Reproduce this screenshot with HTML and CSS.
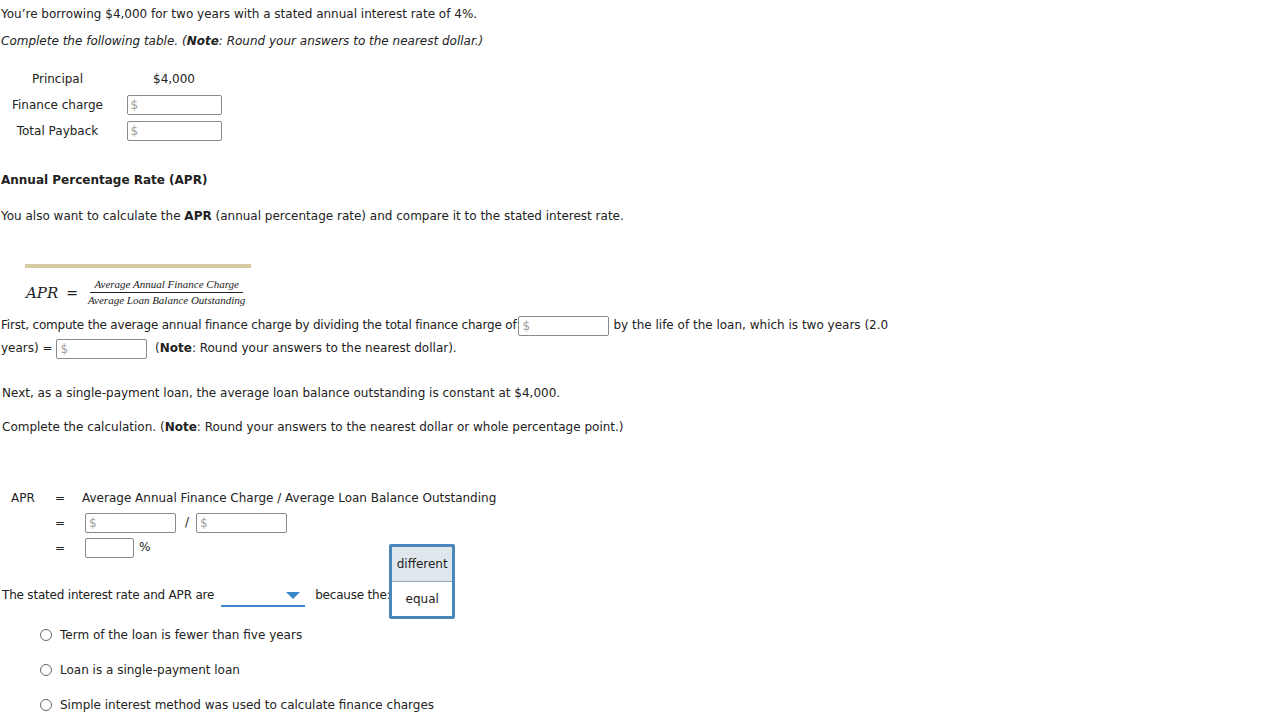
FILE: index.html
```html
<!DOCTYPE html>
<html>
<head>
<meta charset="utf-8">
<link rel="stylesheet" href="styles.css">
</head>
<body>
<div class="page">
  <p class="p1">You’re borrowing $4,000 for two years with a stated annual interest rate of 4%.</p>
  <p class="p2"><i>Complete the following table. (<b>Note</b>: Round your answers to the nearest dollar.)</i></p>

  <table class="t1">
    <tr><td class="lab">Principal</td><td class="val">$4,000</td></tr>
    <tr><td class="lab">Finance charge</td><td class="val"><span class="inp w95">$</span></td></tr>
    <tr><td class="lab">Total Payback</td><td class="val"><span class="inp w95">$</span></td></tr>
  </table>

  <h3 class="h">Annual Percentage Rate (APR)</h3>
  <p class="p3">You also want to calculate the <b>APR</b> (annual percentage rate) and compare it to the stated interest rate.</p>

  <div class="formula">
    <div class="bar"></div>
    <div class="eq">
      <span class="apr">APR</span><span class="eqs">=</span>
      <span class="frac"><span class="num">Average Annual Finance Charge</span><span class="den">Average Loan Balance Outstanding</span></span>
    </div>
  </div>

  <p class="p4"><span class="tight">First, compute the average annual finance charge by dividing the total finance charge of</span><span class="inp w91 gap">$</span>by the life of the loan, which is two years (2.0<br>years) = <span class="inp w91">$</span> &nbsp;(<b>Note</b>: Round your answers to the nearest dollar).</p>

  <p class="p5">Next, as a single-payment loan, the average loan balance outstanding is constant at $4,000.</p>
  <p class="p6">Complete the calculation. (<b>Note</b>: Round your answers to the nearest dollar or whole percentage point.)</p>

  <table class="t2">
    <tr><td class="c1">APR</td><td class="c2">=</td><td class="c3">Average Annual Finance Charge / Average Loan Balance Outstanding</td></tr>
    <tr><td class="c1"></td><td class="c2">=</td><td class="c3"><span class="inp w91">$</span><span class="slash">/</span><span class="inp w91">$</span></td></tr>
    <tr><td class="c1"></td><td class="c2">=</td><td class="c3"><span class="inp w49"></span><span class="pct">%</span></td></tr>
  </table>

  <div class="selrow">
    <span class="tight">The stated interest rate and APR are</span>
    <span class="dd"><svg width="14" height="7" viewBox="0 0 14 7"><path d="M0 0H14L7 7Z" fill="#3a86c8"/></svg>
      <span class="menu"><span class="opt sel">different</span><span class="opt">equal</span></span>
    </span>
    <span class="tight">because the:</span>
  </div>

  <ul class="radios">
    <li><span class="rb"></span>Term of the loan is fewer than five years</li>
    <li><span class="rb"></span>Loan is a single-payment loan</li>
    <li><span class="rb"></span>Simple interest method was used to calculate finance charges</li>
  </ul>
</div>
</body>
</html>
```

FILE: styles.css
```css
html, body { margin: 0; padding: 0; background: #fff; }
body { font-family: "DejaVu Sans", Verdana, sans-serif; font-size: 12px; color: #222; }
.page { padding: 0 0 0 1px; width: 920px; }
p { margin: 0; }
.tight { letter-spacing: -0.2px; }
.p1 { padding-top: 6px; line-height: 16px; }
.p2 { margin-top: 11px; line-height: 16px; }
.t1 { border-collapse: collapse; margin-top: 17px; margin-left: 0; }
.t1 td { padding: 0; height: 26px; text-align: center; }
.t1 .lab { width: 113px; }
.t1 .val { width: 96px; padding-left: 12px; }
.inp { display: inline-block; box-sizing: border-box; height: 20px; border: 1px solid #8a8a8a; border-radius: 2px; color: #a0a0a0; font-size: 12px; line-height: 18px; padding-left: 3px; text-align: left; vertical-align: middle; background: #fff; }
.inp.gap { margin: 0 4px 0 2px; }
.w95 { width: 95px; }
.w91 { width: 91px; }
.w49 { width: 49px; }
.h { font-size: 12px; font-weight: bold; margin: 0; margin-top: 28px; line-height: 16px; }
.p3 { margin-top: 20px; line-height: 16px; }
.formula { margin-top: 40px; padding-left: 24px; }
.bar { width: 226px; height: 4px; background: #d5cca4; }
.eq { display: flex; align-items: center; margin-top: 10px; font-family: "DejaVu Serif", "Liberation Serif", serif; }
.apr { font-style: italic; font-size: 15px; margin-left: 1px; }
.eqs { font-size: 14px; margin: 0 9px 0 8px; }
.frac { display: inline-flex; flex-direction: column; align-items: center; font-style: italic; font-family: "Liberation Serif", serif; font-size: 11px; }
.num { padding: 0 4px 1px; border-bottom: 1px solid #222; line-height: 13px; }
.den { padding: 1px 1px 0; line-height: 13px; }
.p4 { margin-top: 7px; line-height: 23px; }
.p5 { margin-top: 25px; line-height: 16px; padding-left: 1px; }
.p6 { margin-top: 18px; line-height: 16px; padding-left: 1px; }
.t2 { border-collapse: collapse; margin-top: 50px; }
.t2 td { padding: 0; height: 25px; vertical-align: middle; }
.t2 .c1 { width: 44px; padding-left: 10px; }
.t2 .c2 { width: 27px; }
.t2 .c3 { padding-left: 0; }
.t2 tr:nth-child(n+2) .c3 { padding-left: 3px; }
.slash { margin: 0 7px 0 9px; }
.pct { margin-left: 5px; }
.selrow { display: flex; align-items: center; margin-top: 25px; line-height: 16px; padding-left: 1px; }
.dd { position: relative; display: inline-block; width: 84px; height: 18px; border-bottom: 2px solid #3a86c8; margin: 0 10px 0 7px; top: 2px; }
.dd svg { position: absolute; right: 5px; top: 5px; }
.menu { position: absolute; left: 168px; top: -43px; width: 60px; border: 3px solid #4a87ba; border-radius: 2px; background: #fff; display: flex; flex-direction: column; }
.opt { height: 34px; line-height: 34px; text-align: center; font-size: 12px; color: #222; }
.opt.sel { background: #dfe6ec; border-bottom: 1px solid #9aa6b0; }
.radios { list-style: none; margin: 22px 0 0; padding: 0 0 0 39px; }
.radios li { display: flex; align-items: center; height: 16px; margin-bottom: 19px; }
.rb { display: inline-block; width: 10px; height: 10px; border: 1px solid #666; border-radius: 50%; margin-right: 8px; }
```
